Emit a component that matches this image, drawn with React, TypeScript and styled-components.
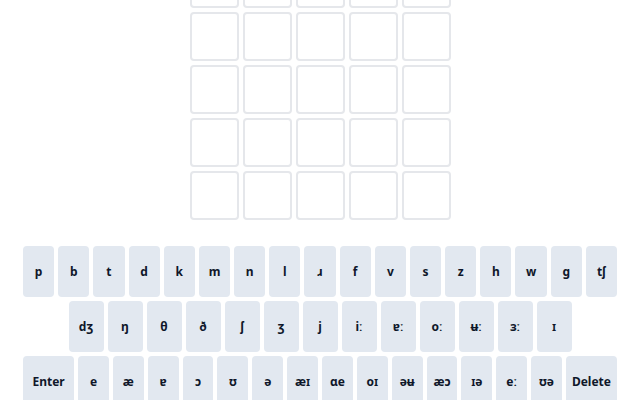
import styled, { createGlobalStyle } from 'styled-components';

const GlobalStyle = createGlobalStyle`
  html, body {
    margin: 0;
    padding: 0;
    background: #ffffff;
  }
  body {
    font-family: 'Noto Sans', 'Open Sans', 'DejaVu Sans', sans-serif;
    color: #0f172a;
  }
`;

const ROWS = 6;
const COLS = 5;

const KEY_ROWS: string[][] = [
  ['p', 'b', 't', 'd', 'k', 'm', 'n', 'l', 'ɹ', 'f', 'v', 's', 'z', 'h', 'w', 'g', 'tʃ'],
  ['dʒ', 'ŋ', 'θ', 'ð', 'ʃ', 'ʒ', 'j', 'iː', 'ɐː', 'oː', 'ʉː', 'ɜː', 'ɪ'],
  ['Enter', 'e', 'æ', 'ɐ', 'ɔ', 'ʊ', 'ə', 'æɪ', 'ɑe', 'oɪ', 'əʉ', 'æɔ', 'ɪə', 'eː', 'ʊə', 'Delete'],
];

const Page = styled.main`
  height: 100vh;
  overflow: hidden;
  display: flex;
  flex-direction: column;
  align-items: center;
  justify-content: center;
`;

const Game = styled.div`
  display: flex;
  flex-direction: column;
  align-items: center;
  gap: 26px;
  padding-bottom: 87px;
`;

const Board = styled.div`
  display: grid;
  grid-template-columns: repeat(${COLS}, 49px);
  grid-auto-rows: 49px;
  gap: 4px;
`;

const Tile = styled.div`
  box-sizing: border-box;
  border: 2px solid #e5e7eb;
  border-radius: 4px;
  background: #ffffff;
  display: flex;
  align-items: center;
  justify-content: center;
  font-weight: 700;
  font-size: 24px;
`;

const Keyboard = styled.div`
  width: 594px;
  display: flex;
  flex-direction: column;
  gap: 4px;
`;

const KeyRow = styled.div`
  display: flex;
  justify-content: center;
  gap: 4px;
`;

const Key = styled.button<{ $wide?: boolean }>`
  flex: 0 1 ${(p) => (p.$wide ? '58px' : '35px')};
  min-width: 0;
  height: 51px;
  padding: 0;
  border: none;
  border-radius: 4px;
  background: #e2e8f0;
  color: #0f172a;
  font-family: 'Noto Sans', 'Open Sans', 'DejaVu Sans', sans-serif;
  font-size: 12px;
  font-weight: 700;
  display: flex;
  align-items: center;
  justify-content: center;
  cursor: pointer;
`;

export default function App() {
  const tiles = Array.from({ length: ROWS * COLS });

  return (
    <>
      <GlobalStyle />
      <Page>
        <Game>
          <Board>
            {tiles.map((_, i) => (
              <Tile key={i} />
            ))}
          </Board>
          <Keyboard>
            {KEY_ROWS.map((row, r) => (
              <KeyRow key={r}>
                {row.map((k) => (
                  <Key key={k} $wide={k === 'Enter' || k === 'Delete'}>
                    {k}
                  </Key>
                ))}
              </KeyRow>
            ))}
          </Keyboard>
        </Game>
      </Page>
    </>
  );
}
